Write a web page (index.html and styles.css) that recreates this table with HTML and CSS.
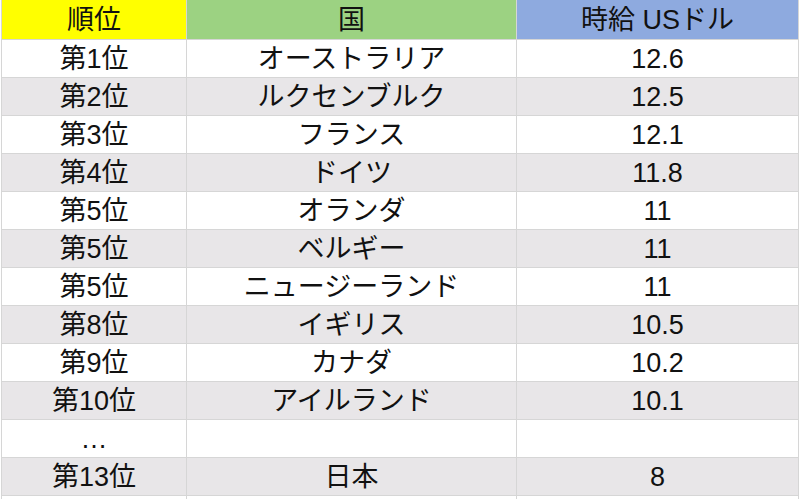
FILE: index.html
```html
<!DOCTYPE html>
<html lang="ja">
<head>
<meta charset="utf-8">
<link rel="stylesheet" href="styles.css">
</head>
<body>
<table class="rank">
  <colgroup><col class="c1"><col class="c2"><col class="c3"></colgroup>
  <thead>
    <tr class="head"><th class="h-yellow">順位</th><th class="h-green">国</th><th class="h-blue">時給 USドル</th></tr>
  </thead>
  <tbody>
    <tr><td>第1位</td><td>オーストラリア</td><td>12.6</td></tr>
    <tr class="alt"><td>第2位</td><td>ルクセンブルク</td><td>12.5</td></tr>
    <tr><td>第3位</td><td>フランス</td><td>12.1</td></tr>
    <tr class="alt"><td>第4位</td><td>ドイツ</td><td>11.8</td></tr>
    <tr><td>第5位</td><td>オランダ</td><td>11</td></tr>
    <tr class="alt"><td>第5位</td><td>ベルギー</td><td>11</td></tr>
    <tr><td>第5位</td><td>ニュージーランド</td><td>11</td></tr>
    <tr class="alt"><td>第8位</td><td>イギリス</td><td>10.5</td></tr>
    <tr><td>第9位</td><td>カナダ</td><td>10.2</td></tr>
    <tr class="alt"><td>第10位</td><td>アイルランド</td><td>10.1</td></tr>
    <tr><td class="dots">…</td><td></td><td></td></tr>
    <tr class="alt"><td>第13位</td><td>日本</td><td>8</td></tr>
    <tr><td></td><td></td><td></td></tr>
  </tbody>
</table>
</body>
</html>
```
FILE: styles.css
```css
html, body {
  margin: 0;
  padding: 0;
  background: #ffffff;
  overflow: hidden;
}
body {
  font-family: "Liberation Sans", "Noto Sans CJK JP", sans-serif;
  color: #111111;
}
.rank {
  border-collapse: collapse;
  table-layout: fixed;
  width: 797px;
  margin-left: 1px;
}
.c1 { width: 185px; }
.c2 { width: 330px; }
.c3 { width: 282px; }
.rank th, .rank td {
  border: 1px solid #d6d6d6;
  height: 37px;
  padding: 0;
  text-align: center;
  vertical-align: middle;
  font-size: 27px;
  font-weight: 400;
  line-height: 30px;
}
.rank .head th {
  height: 39px;
  border-top: none;
}
.h-yellow { background: #ffff00; }
.h-green { background: #9cd282; }
.h-blue { background: #8eaadf; }
.alt td { background: #e8e6e8; }
.dots { font-size: 24px; }
```
